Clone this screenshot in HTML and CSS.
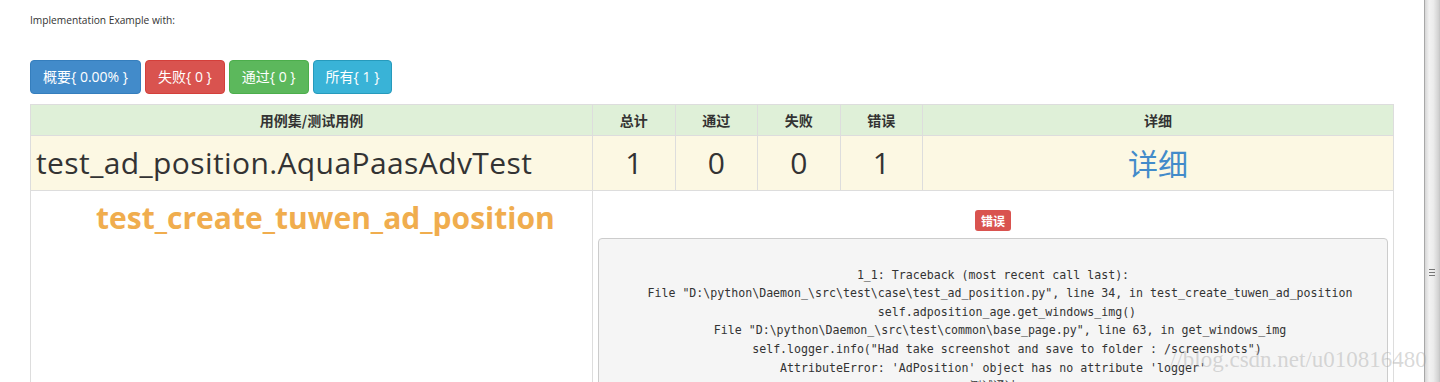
FILE: index.html
```html
<!DOCTYPE html>
<html lang="zh-CN">
<head>
<meta charset="utf-8">
<title>Test Report</title>
<link rel="stylesheet" href="styles.css">
</head>
<body>
<div class="page">
  <main class="content">
    <p class="intro">Implementation Example with:</p>
    <div class="btns">
      <button class="btn btn-primary">概要{ 0.00% }</button>
      <button class="btn btn-danger">失败{ 0 }</button>
      <button class="btn btn-success">通过{ 0 }</button>
      <button class="btn btn-info">所有{ 1 }</button>
    </div>
    <table class="report">
      <colgroup>
        <col class="c-name">
        <col class="c-num">
        <col class="c-num">
        <col class="c-num">
        <col class="c-num">
        <col>
      </colgroup>
      <thead>
        <tr class="head-row">
          <th>用例集/测试用例</th>
          <th>总计</th>
          <th>通过</th>
          <th>失败</th>
          <th>错误</th>
          <th>详细</th>
        </tr>
      </thead>
      <tbody>
        <tr class="suite-row">
          <td class="suite-name">test_ad_position.AquaPaasAdvTest</td>
          <td class="num">1</td>
          <td class="num">0</td>
          <td class="num">0</td>
          <td class="num">1</td>
          <td class="num"><a class="detail-link" href="#">详细</a></td>
        </tr>
        <tr class="case-row">
          <td class="case-cell"><div class="case-name">test_create_tuwen_ad_position</div></td>
          <td class="case-detail" colspan="5">
            <span class="label-error">错误</span>
            <pre class="trace">

1_1: Traceback (most recent call last):
  File "D:\python\Daemon_\src\test\case\test_ad_position.py", line 34, in test_create_tuwen_ad_position
    self.adposition_age.get_windows_img()
  File "D:\python\Daemon_\src\test\common\base_page.py", line 63, in get_windows_img
    self.logger.info("Had take screenshot and save to folder : /screenshots")
AttributeError: 'AdPosition' object has no attribute 'logger'
测试通过
</pre>
          </td>
        </tr>
      </tbody>
    </table>
  </main>
  <div class="scrollbar"><div class="thumb"><span class="grip"></span></div></div>
  <div class="watermark">//blog.csdn.net/u010816480</div>
</div>
</body>
</html>
```
FILE: styles.css
```css
* { box-sizing: border-box; }
html, body { margin: 0; padding: 0; background: #fff; }
body {
  font-family: "Open Sans", "Noto Sans CJK SC", sans-serif;
  color: #333;
  overflow: hidden;
}
.page {
  position: relative;
  display: flex;
  height: 382px;
  overflow: hidden;
}
.content {
  flex: 1;
  padding: 0 30px;
  min-width: 0;
}
.intro {
  margin: 13px 0 0;
  font-size: 10.2px;
  line-height: 14px;
  color: #333;
}
.btns {
  display: flex;
  gap: 4px;
  margin-top: 33px;
}
.btn {
  height: 34px;
  padding: 0 12px;
  font-family: "Open Sans", "Noto Sans CJK SC", sans-serif;
  font-size: 14px;
  color: #fff;
  border: 1px solid transparent;
  border-radius: 4px;
  line-height: 32px;
  cursor: pointer;
}
.btn-primary { background: #428bca; border-color: #357ebd; }
.btn-danger { background: #d9534f; border-color: #d43f3a; }
.btn-success { background: #5cb85c; border-color: #4cae4c; }
.btn-info { background: #39b3d7; border-color: #269abc; }

.report {
  margin-top: 10px;
  width: 100%;
  table-layout: fixed;
  border-collapse: collapse;
  border: 1px solid #ddd;
}
.c-name { width: 562px; }
.c-num { width: 82.5px; }
.report th, .report td {
  border: 1px solid #ddd;
  padding: 5px;
}
.head-row th {
  background: #dff0d8;
  font-family: "Noto Sans CJK SC", sans-serif;
  font-size: 14px;
  font-weight: 700;
  line-height: 20px;
  text-align: center;
  color: #333;
}
.suite-row td {
  background: #fcf8e3;
  font-size: 30px;
  line-height: 42px;
  color: #333;
}
.suite-name {
  white-space: nowrap;
  overflow: hidden;
  padding-left: 6px;
  letter-spacing: 0.4px;
}
.num { text-align: center; }
.detail-link {
  color: #428bca;
  text-decoration: none;
  font-family: "Noto Sans CJK SC", sans-serif;
  letter-spacing: 0;
}
.case-row td { vertical-align: top; }
.case-name {
  padding-left: 60px;
  margin-top: 2px;
  font-size: 30px;
  font-weight: 700;
  line-height: 40px;
  color: #f0ad4e;
  white-space: nowrap;
}
.case-detail {
  text-align: center;
}
.label-error {
  display: inline-block;
  margin-top: 14px;
  padding: 0 6px;
  height: 21px;
  line-height: 21px;
  font-family: "Noto Sans CJK SC", sans-serif;
  font-size: 12px;
  font-weight: 700;
  color: #fff;
  background: #d9534f;
  border-radius: 3px;
}
.trace {
  margin: 7px 0 0;
  padding: 8px 9px;
  background: #f5f5f5;
  border: 1px solid #ccc;
  border-radius: 4px;
  font-family: "DejaVu Sans Mono", "Noto Sans CJK SC", monospace;
  font-size: 11.6px;
  line-height: 18.6px;
  color: #333;
  text-align: center;
  white-space: pre;
}
.scrollbar {
  width: 16px;
  flex: none;
  background: #f0f0f0;
  display: flex;
}
.thumb {
  flex: 1;
  border-left: 1px solid #a8a8a8;
  border-right: 1px solid #c8c8c8;
  background: linear-gradient(to right, #d6d6d6, #f2f2f2 30%, #ececec 60%, #cfcfcf);
  display: flex;
  align-items: flex-start;
  justify-content: center;
  padding-top: 269px;
}
.grip {
  display: block;
  width: 6px;
  height: 7px;
  background: repeating-linear-gradient(to bottom, #777 0, #777 1px, transparent 1px, transparent 3px);
}
.watermark {
  position: absolute;
  left: 1170px;
  top: 347px;
  font-family: "Liberation Serif", serif;
  font-size: 23px;
  color: rgba(170, 170, 170, 0.45);
  white-space: nowrap;
  pointer-events: none;
}
```
